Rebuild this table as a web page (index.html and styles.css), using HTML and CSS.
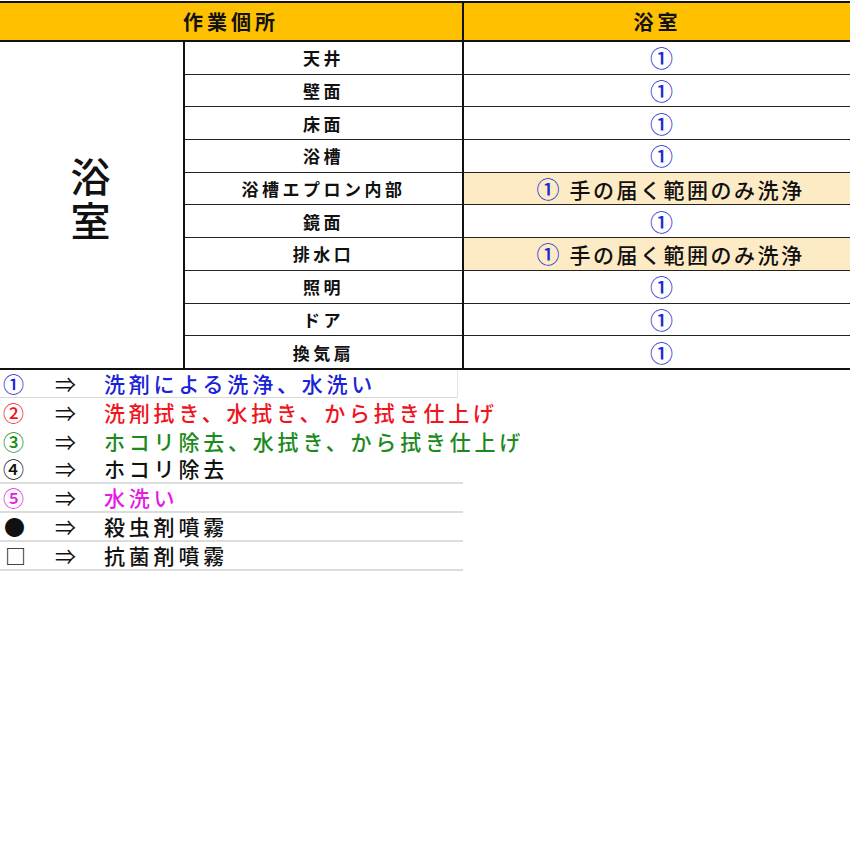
FILE: index.html
```html
<!DOCTYPE html>
<html lang="ja">
<head>
<meta charset="utf-8">
<link rel="stylesheet" href="styles.css">
</head>
<body>
<div class="wrap">
<table class="sheet">
  <colgroup>
    <col class="c1"><col class="c2"><col class="c3">
  </colgroup>
  <thead>
    <tr><th colspan="2">作業個所</th><th class="right">浴室</th></tr>
  </thead>
  <tbody>
    <tr><td class="room" rowspan="10"><span class="roomtxt">浴室</span></td><td class="item">天井</td><td class="val"><span class="no">①</span></td></tr>
    <tr><td class="item">壁面</td><td class="val"><span class="no">①</span></td></tr>
    <tr><td class="item">床面</td><td class="val"><span class="no">①</span></td></tr>
    <tr><td class="item">浴槽</td><td class="val"><span class="no">①</span></td></tr>
    <tr><td class="item">浴槽エプロン内部</td><td class="val note"><span class="no">①</span> 手の届く範囲のみ洗浄</td></tr>
    <tr><td class="item">鏡面</td><td class="val"><span class="no">①</span></td></tr>
    <tr><td class="item">排水口</td><td class="val note"><span class="no">①</span> 手の届く範囲のみ洗浄</td></tr>
    <tr><td class="item">照明</td><td class="val"><span class="no">①</span></td></tr>
    <tr><td class="item">ドア</td><td class="val"><span class="no">①</span></td></tr>
    <tr class="last"><td class="item">換気扇</td><td class="val"><span class="no">①</span></td></tr>
  </tbody>
</table>
</div>
<div class="legend">
  <div class="lrow first blue"><span class="sym">①</span><span class="arr">⇒</span><span class="txt">洗剤による洗浄、水洗い</span></div>
  <div class="lrow red"><span class="sym">②</span><span class="arr">⇒</span><span class="txt">洗剤拭き、水拭き、から拭き仕上げ</span></div>
  <div class="lrow green"><span class="sym">③</span><span class="arr">⇒</span><span class="txt">ホコリ除去、水拭き、から拭き仕上げ</span></div>
  <div class="lrow line black"><span class="sym">④</span><span class="arr">⇒</span><span class="txt">ホコリ除去</span></div>
  <div class="lrow line pink"><span class="sym">⑤</span><span class="arr">⇒</span><span class="txt">水洗い</span></div>
  <div class="lrow line black"><span class="sym dot">●</span><span class="arr">⇒</span><span class="txt">殺虫剤噴霧</span></div>
  <div class="lrow line black"><span class="sym sq">□</span><span class="arr">⇒</span><span class="txt">抗菌剤噴霧</span></div>
</div>
</body>
</html>
```
FILE: styles.css
```css
html, body {
  margin: 0;
  padding: 0;
  background: #fff;
}
body {
  font-family: "Noto Sans CJK JP", "Noto Sans", sans-serif;
  color: #111;
  overflow: hidden;
}
.wrap {
  width: 850px;
  overflow: hidden;
}
.sheet {
  border-collapse: collapse;
  width: 860px;
  table-layout: fixed;
  margin-top: 1px;
}
.c1 { width: 184px; }
.c2 { width: 279px; }
.c3 { width: 397px; }
.sheet th {
  background: #ffc000;
  height: 37px;
  padding: 0;
  font-size: 20px;
  font-weight: 700;
  letter-spacing: 4px;
  border: 2px solid #111;
  text-align: center;
  vertical-align: middle;
  line-height: 1;
}
.sheet th:first-child {
  border-left: none;
}
.sheet th.right {
  padding-right: 8px;
}
.sheet td {
  padding: 0;
  text-align: center;
  vertical-align: middle;
  line-height: 1;
}
.room {
  border-right: 2px solid #111;
  border-bottom: 2px solid #111;
}
.roomtxt {
  display: inline-block;
  writing-mode: vertical-rl;
  font-size: 40px;
  font-weight: 500;
  letter-spacing: 4px;
  line-height: 1;
  margin-top: -6px;
  margin-left: -2px;
}
.item {
  height: 31.7px;
  font-size: 17px;
  font-weight: 700;
  letter-spacing: 3.5px;
  border-bottom: 1px solid #222;
}
.val {
  font-size: 21px;
  border-left: 2px solid #111;
  border-right: 2px solid #111;
  border-bottom: 1px solid #222;
  letter-spacing: 2.5px;
  font-weight: 500;
}
.val.note {
  padding-left: 18px;
}
.last .item, .last .val {
  border-bottom: 2px solid #111;
}
.no {
  color: #1a2bd6;
  font-size: 23px;
  font-weight: 500;
  letter-spacing: 0;
}
.note .no {
  margin-right: 3px;
}
.note {
  background: #fdebc6;
  color: #111;
}
.legend {
  width: 463px;
  display: flex;
  flex-direction: column;
}
.lrow {
  display: flex;
  align-items: center;
  height: 28.5px;
  font-size: 21px;
  font-weight: 500;
  white-space: nowrap;
  line-height: 1;
}
.lrow.first {
  border-bottom: 1px solid #d8d8d8;
  border-right: 1px solid #e4e4e4;
  width: 457px;
  height: 27.5px;
}
.lrow.line {
  border-bottom: 2px solid #dcdcdc;
  height: 27px;
}
.sym {
  flex: 0 0 52px;
  padding-left: 3px;
  box-sizing: border-box;
  font-size: 21px;
  font-weight: 500;
}
.sym.dot { padding-left: 4px; }
.sym.sq { padding-left: 5px; }
.arr {
  flex: 0 0 52px;
  padding-left: 3px;
  box-sizing: border-box;
  font-size: 21px;
  font-weight: 400;
}
.txt {
  letter-spacing: 3.8px;
}
.blue { color: #1a23d8; }
.red { color: #f0141e; }
.green { color: #1c8a1c; }
.black { color: #111; }
.pink { color: #e619e6; }
.blue .arr, .red .arr, .green .arr, .pink .arr, .black .arr { color: #111; }
```
